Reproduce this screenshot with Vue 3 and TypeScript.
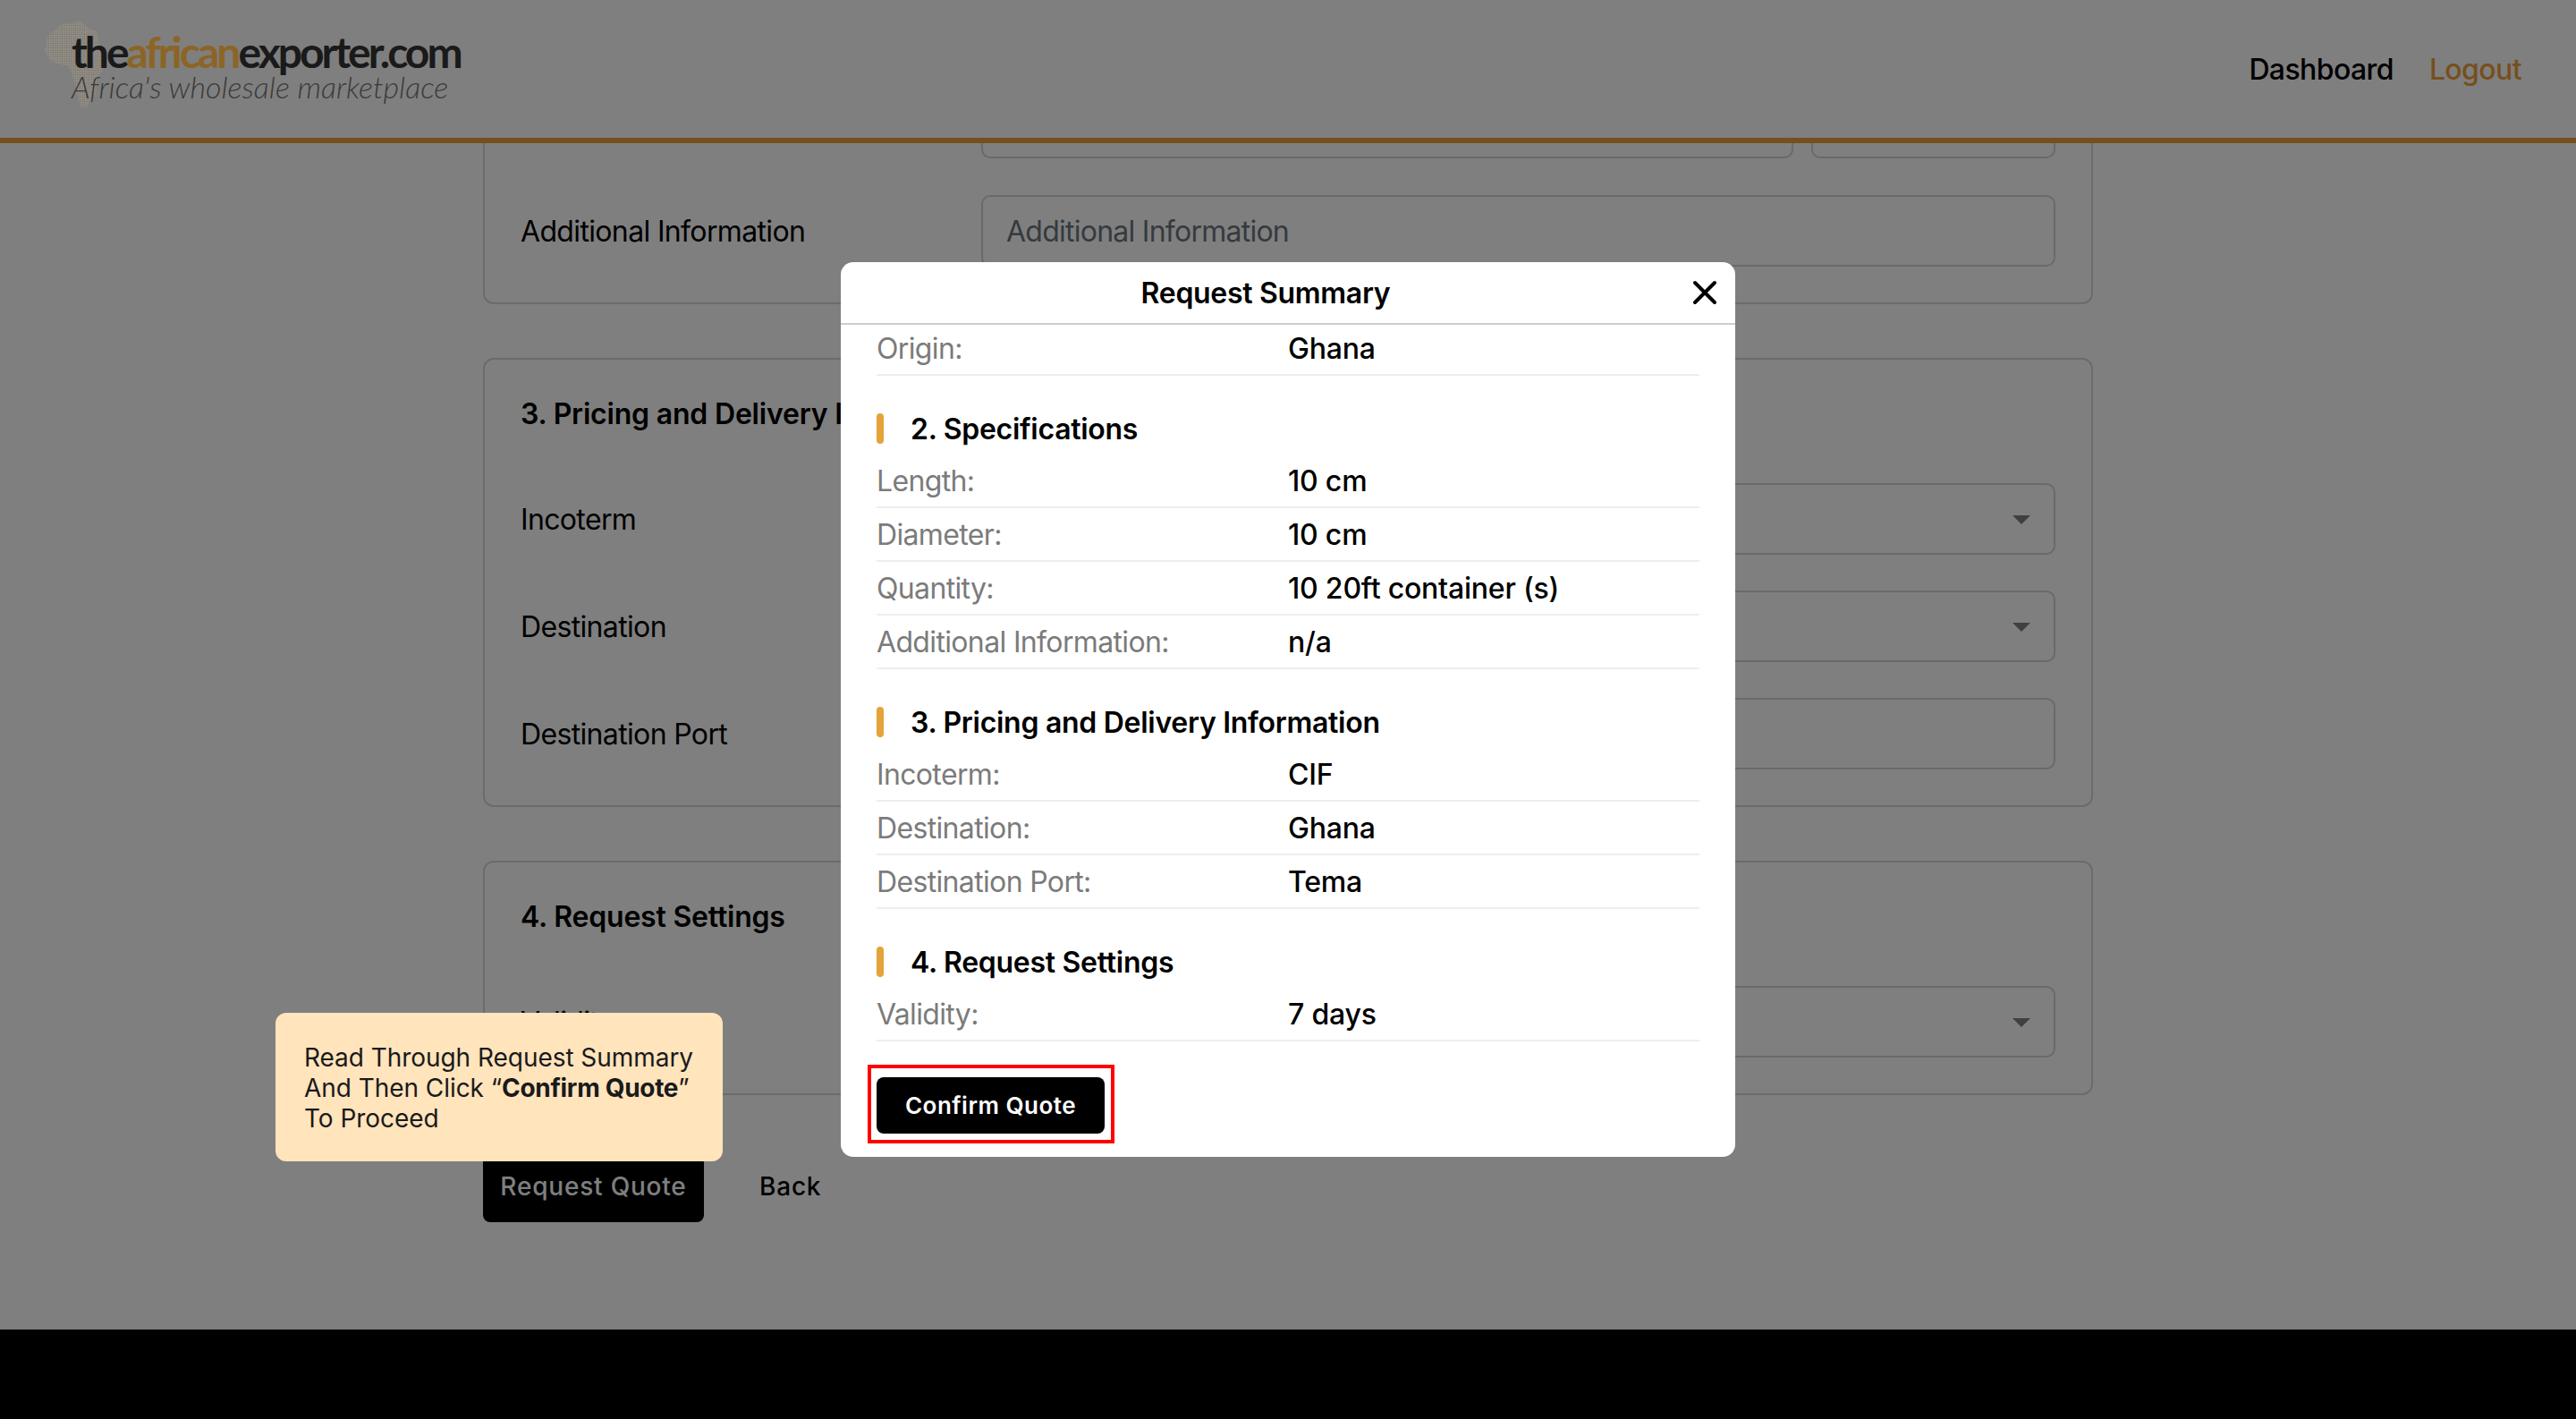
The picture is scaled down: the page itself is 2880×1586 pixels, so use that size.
<script setup lang="ts">
interface SummarySection {
  title?: string
  rows: { label: string; value: string }[]
}

const sections: SummarySection[] = [
  { rows: [{ label: 'Origin:', value: 'Ghana' }] },
  {
    title: '2. Specifications',
    rows: [
      { label: 'Length:', value: '10 cm' },
      { label: 'Diameter:', value: '10 cm' },
      { label: 'Quantity:', value: '10 20ft container (s)' },
      { label: 'Additional Information:', value: 'n/a' },
    ],
  },
  {
    title: '3. Pricing and Delivery Information',
    rows: [
      { label: 'Incoterm:', value: 'CIF' },
      { label: 'Destination:', value: 'Ghana' },
      { label: 'Destination Port:', value: 'Tema' },
    ],
  },
  {
    title: '4. Request Settings',
    rows: [{ label: 'Validity:', value: '7 days' }],
  },
]
</script>

<template>
  <div class="page">
    <header class="topbar">
      <a class="logo">
        <svg class="logo-map" viewBox="0 0 70 97" aria-hidden="true">
          <defs>
            <pattern id="dots" width="2.5" height="2.5" patternUnits="userSpaceOnUse">
              <rect width="1.5" height="1.5" fill="#c9b27a" />
            </pattern>
          </defs>
          <path
            d="M20 3 L40 0 L50 8 L58 11 L62 28 L70 41 L64 56 L58 66 L56 82 L47 96 L40 95 L36 80 L32 62 L26 50 L7 45 L0 32 L4 15 Z"
            fill="url(#dots)"
          />
        </svg>
        <span class="logo-name">the<span class="logo-gold">african</span>exporter.com</span>
        <span class="logo-tag">Africa's wholesale marketplace</span>
      </a>
      <nav class="nav">
        <a>Dashboard</a>
        <a class="nav-logout">Logout</a>
      </nav>
    </header>

    <main class="form">
      <section class="card card-cut">
        <div class="cut-row">
          <div class="cut-input cut-wide"></div>
          <div class="cut-input cut-narrow"></div>
        </div>
        <div class="field">
          <label>Additional Information</label>
          <input class="control" placeholder="Additional Information" />
        </div>
      </section>

      <section class="card">
        <h2>3. Pricing and Delivery Information</h2>
        <div class="field">
          <label>Incoterm</label>
          <div class="control select"><i class="caret"></i></div>
        </div>
        <div class="field">
          <label>Destination</label>
          <div class="control select"><i class="caret"></i></div>
        </div>
        <div class="field">
          <label>Destination Port</label>
          <div class="control"></div>
        </div>
      </section>

      <section class="card">
        <h2>4. Request Settings</h2>
        <div class="field">
          <label>Validity</label>
          <div class="control select"><i class="caret"></i></div>
        </div>
      </section>

      <div class="actions">
        <button type="button" class="btn-request">Request Quote</button>
        <a class="back">Back</a>
      </div>
    </main>

    <footer class="footer"></footer>

    <div class="overlay">
      <div class="modal">
        <div class="modal-head">
          <div class="modal-title">Request Summary</div>
          <button type="button" class="modal-close" aria-label="Close">
            <svg width="28" height="28" viewBox="0 0 28 28" aria-hidden="true">
              <path d="M3 3 L25 25 M25 3 L3 25" stroke="#000" stroke-width="4" stroke-linecap="round" fill="none" />
            </svg>
          </button>
        </div>
        <div class="modal-body">
          <div class="summary">
            <div v-for="(section, i) in sections" :key="i" class="summary-section">
              <h3 v-if="section.title" class="summary-title">{{ section.title }}</h3>
              <div v-for="row in section.rows" :key="row.label" class="summary-row">
                <span class="summary-label">{{ row.label }}</span>
                <span class="summary-value">{{ row.value }}</span>
              </div>
            </div>
          </div>
          <div class="confirm-wrap">
            <button type="button" class="btn-confirm">Confirm Quote</button>
            <span class="highlight"></span>
          </div>
        </div>
      </div>

      <div class="tip">
        Read Through Request Summary And Then Click “<b>Confirm Quote</b>” To Proceed
      </div>
    </div>
  </div>
</template>

<style>
html,
body {
  margin: 0;
  background: #fff;
}
</style>

<style scoped>
.page {
  position: relative;
  display: flex;
  flex-direction: column;
  height: 1586px;
  overflow: hidden;
  font-family: Inter, "Liberation Sans", sans-serif;
  font-size: 32px;
  letter-spacing: -0.65px;
  color: #000;
  background: #fff;
}

.topbar {
  flex: none;
  box-sizing: border-box;
  height: 160px;
  display: flex;
  align-items: center;
  justify-content: space-between;
  padding: 0 61px 0 80px;
  border-bottom: 6px solid #ed9f3d;
  background: #fff;
}

.logo {
  position: relative;
  z-index: 11;
  display: flex;
  flex-direction: column;
  margin-top: -10px;
}

.logo-map {
  position: absolute;
  left: -30px;
  top: -6px;
  width: 70px;
  height: 97px;
  opacity: 0.45;
}

.logo-name {
  position: relative;
  font-family: Lato, "Liberation Sans", sans-serif;
  font-size: 48px;
  font-weight: 700;
  line-height: 56px;
  letter-spacing: -3px;
  color: #1a1a1a;
}

.logo-gold {
  color: #8c6526;
}

.logo-tag {
  position: relative;
  margin-top: -6px;
  font-family: Lato, "Liberation Sans", sans-serif;
  font-size: 34px;
  font-style: italic;
  font-weight: 300;
  line-height: 34px;
  letter-spacing: 0;
  color: #3a3a3a;
}

.nav {
  display: flex;
  gap: 40px;
  font-weight: 500;
  letter-spacing: -0.6px;
}

.nav-logout {
  color: #ed9f3d;
}

.form {
  flex: 1;
  min-height: 0;
  overflow: hidden;
  display: flex;
  flex-direction: column;
  gap: 60px;
  padding: 0 540px;
}

.card {
  flex: none;
  box-sizing: border-box;
  display: flex;
  flex-direction: column;
  gap: 40px;
  padding: 41px 40px 40px;
  border: 2px solid #d6d6d6;
  border-radius: 12px;
}

.card h2 {
  margin: 0 0 17px;
  font-size: 32px;
  font-weight: 600;
  line-height: 40px;
  letter-spacing: -0.2px;
}

.card-cut {
  gap: 41px;
  padding-top: 0;
  border-top: 0;
  border-top-left-radius: 0;
  border-top-right-radius: 0;
}

.cut-row {
  display: flex;
  gap: 20px;
  padding-left: 515px;
}

.cut-input {
  box-sizing: border-box;
  height: 17px;
  border: 2px solid #ced4da;
  border-top: 0;
  border-radius: 0 0 10px 10px;
}

.cut-wide {
  flex: 1;
}

.cut-narrow {
  width: 273px;
}

.field {
  display: flex;
  align-items: center;
}

.field label {
  flex: none;
  width: 515px;
}

.control {
  flex: 1;
  min-width: 0;
  box-sizing: border-box;
  height: 80px;
  padding: 0 26px;
  border: 2px solid #ced4da;
  border-radius: 10px;
  background: #fff;
  font: inherit;
  letter-spacing: -0.75px;
  color: #000;
  outline: none;
}

.control::placeholder {
  color: #6c757d;
}

.select {
  position: relative;
}

.caret {
  position: absolute;
  right: 26px;
  top: 34px;
  width: 0;
  height: 0;
  border-left: 10px solid transparent;
  border-right: 10px solid transparent;
  border-top: 10px solid #808080;
}

.actions {
  display: flex;
  align-items: center;
  gap: 62px;
  margin-top: 2px;
}

.btn-request {
  width: 247px;
  height: 80px;
  padding: 0;
  border: 0;
  border-radius: 8px;
  background: #000;
  color: #fff;
  font: inherit;
  font-size: 28px;
  font-weight: 500;
  letter-spacing: 0.8px;
}

.back {
  font-size: 28px;
  font-weight: 500;
  letter-spacing: 0.8px;
}

.footer {
  flex: none;
  height: 100px;
  background: #000;
}

.overlay {
  position: absolute;
  inset: 0;
  z-index: 10;
  display: flex;
  align-items: center;
  justify-content: center;
  background: rgba(0, 0, 0, 0.5);
}

.modal {
  display: flex;
  flex-direction: column;
  width: 1000px;
  height: 1000px;
  border-radius: 14px;
  background: #fff;
  overflow: hidden;
}

.modal-head {
  flex: none;
  box-sizing: border-box;
  height: 70px;
  display: flex;
  align-items: center;
  border-bottom: 2px solid #ccc;
}

.modal-title {
  flex: 1;
  text-align: center;
  font-weight: 600;
  letter-spacing: -0.3px;
}

.modal-close {
  flex: none;
  box-sizing: border-box;
  width: 50px;
  height: 50px;
  padding: 0 0 0 2px;
  border: 0;
  background: none;
  display: flex;
  align-items: center;
  justify-content: flex-start;
}

.modal-body {
  flex: 1;
  min-height: 0;
  padding: 0 40px;
  overflow: hidden;
}

.summary {
  margin-top: -3px;
}

.summary-section + .summary-section {
  margin-top: 42px;
}

.summary-title {
  position: relative;
  margin: 0 0 10px;
  padding-left: 38px;
  font-size: 32px;
  font-weight: 600;
  line-height: 36px;
  letter-spacing: -0.28px;
}

.summary-title::before {
  content: "";
  position: absolute;
  left: 0;
  top: 0;
  width: 8px;
  height: 34px;
  border-radius: 4px;
  background: #e5a33a;
}

.summary-row {
  box-sizing: border-box;
  height: 60px;
  display: flex;
  align-items: center;
  border-bottom: 2px solid #eee;
}

.summary-label {
  flex: none;
  width: 460px;
  color: #7b7b7b;
}

.summary-value {
  font-weight: 500;
  letter-spacing: -0.2px;
}

.confirm-wrap {
  position: relative;
  width: 255px;
  margin-top: 40px;
}

.btn-confirm {
  display: block;
  width: 255px;
  height: 63px;
  padding: 0;
  border: 0;
  border-radius: 8px;
  background: #000;
  color: #fff;
  font: inherit;
  font-size: 26px;
  font-weight: 600;
  letter-spacing: 0.5px;
}

.highlight {
  position: absolute;
  left: -10px;
  right: -11px;
  top: -14px;
  bottom: -11px;
  border: 4px solid #f00;
  pointer-events: none;
}

.tip {
  position: absolute;
  left: 308px;
  top: 1132px;
  box-sizing: border-box;
  width: 500px;
  height: 166px;
  padding: 33px 30px 30px 32px;
  border-radius: 12px;
  background: #ffe4bc;
  font-size: 28px;
  line-height: 34px;
  letter-spacing: -0.05px;
  color: #1a1a1a;
}

.tip b {
  font-weight: 700;
  letter-spacing: -0.3px;
}
</style>
